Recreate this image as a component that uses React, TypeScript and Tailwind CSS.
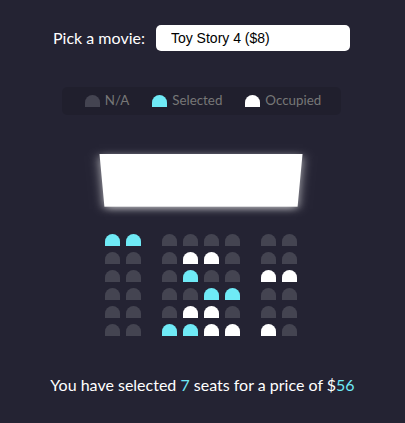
import { useState } from 'react'

type Seat = 'n' | 's' | 'o'

const ROWS: Seat[][] = [
  ['s', 's', 'n', 'n', 'n', 'n', 'n', 'n'],
  ['n', 'n', 'n', 'o', 'o', 'n', 'n', 'n'],
  ['n', 'n', 'n', 's', 'n', 'n', 'o', 'o'],
  ['n', 'n', 'n', 'n', 's', 's', 'n', 'n'],
  ['n', 'n', 'n', 'o', 'o', 'n', 'n', 'n'],
  ['n', 'n', 's', 's', 'o', 'o', 'o', 'n'],
]

const MOVIES = [
  { label: 'Avengers: Endgame ($10)', price: 10 },
  { label: 'Joker ($12)', price: 12 },
  { label: 'Toy Story 4 ($8)', price: 8 },
  { label: 'The Lion King ($9)', price: 9 },
]

function SeatBox({ kind, extra = '' }: { kind: Seat; extra?: string }) {
  const color = kind === 's' ? 'bg-[#6feaf6]' : kind === 'o' ? 'bg-white' : 'bg-[#444451]'
  return <div className={`m-[3px] h-[12px] w-[15px] rounded-t-[10px] ${color} ${extra}`} />
}

export default function App() {
  const [movie, setMovie] = useState(2)
  const price = MOVIES[movie].price
  const count = ROWS.flat().filter((s) => s === 's').length

  return (
    <div className="flex h-screen flex-col items-center bg-[#242333] font-['Lato',sans-serif] text-white">
      <div className="mt-[25px] mr-[2px] flex h-[26px] items-center gap-[11px] text-base">
        <label>Pick a movie:</label>
        <select
          value={movie}
          onChange={(e) => setMovie(Number(e.target.value))}
          className="h-[26px] w-[194px] appearance-none rounded-[5px] border-0 bg-white px-[15px] font-['Liberation_Sans',Arial,sans-serif] text-[14px] text-black outline-none"
        >
          {MOVIES.map((m, i) => (
            <option key={m.label} value={i}>
              {m.label}
            </option>
          ))}
        </select>
      </div>

      <ul className="mt-[36px] mr-[2px] flex h-[28px] items-center rounded-[5px] bg-black/10 px-[10px] text-[#777]">
        <li className="mx-[10px] flex items-center">
          <SeatBox kind="n" />
          <small className="ml-[2px] text-[13.33px]">N/A</small>
        </li>
        <li className="mx-[10px] flex items-center">
          <SeatBox kind="s" />
          <small className="ml-[2px] text-[13.33px]">Selected</small>
        </li>
        <li className="mx-[10px] flex items-center">
          <SeatBox kind="o" />
          <small className="ml-[2px] text-[13.33px]">Occupied</small>
        </li>
      </ul>

      <div className="mt-[31px] mr-[4px] [perspective:1000px]">
        <div className="h-[70px] w-full bg-white shadow-[0_3px_10px_rgba(255,255,255,0.7)] [transform:rotateX(-45deg)]" />
        <div className="mt-[15px]">
          {ROWS.map((row, r) => (
            <div key={r} className="flex">
              {row.map((s, i) => (
                <SeatBox
                  key={i}
                  kind={s}
                  extra={i === 1 ? 'mr-[18px]' : i === 6 ? 'ml-[18px]' : ''}
                />
              ))}
            </div>
          ))}
        </div>
      </div>

      <p className="mt-[34px] text-base leading-6">
        You have selected <span className="text-[#6feaf6]">{count}</span> seats for a price of $
        <span className="text-[#6feaf6]">{count * price}</span>
      </p>
    </div>
  )
}
